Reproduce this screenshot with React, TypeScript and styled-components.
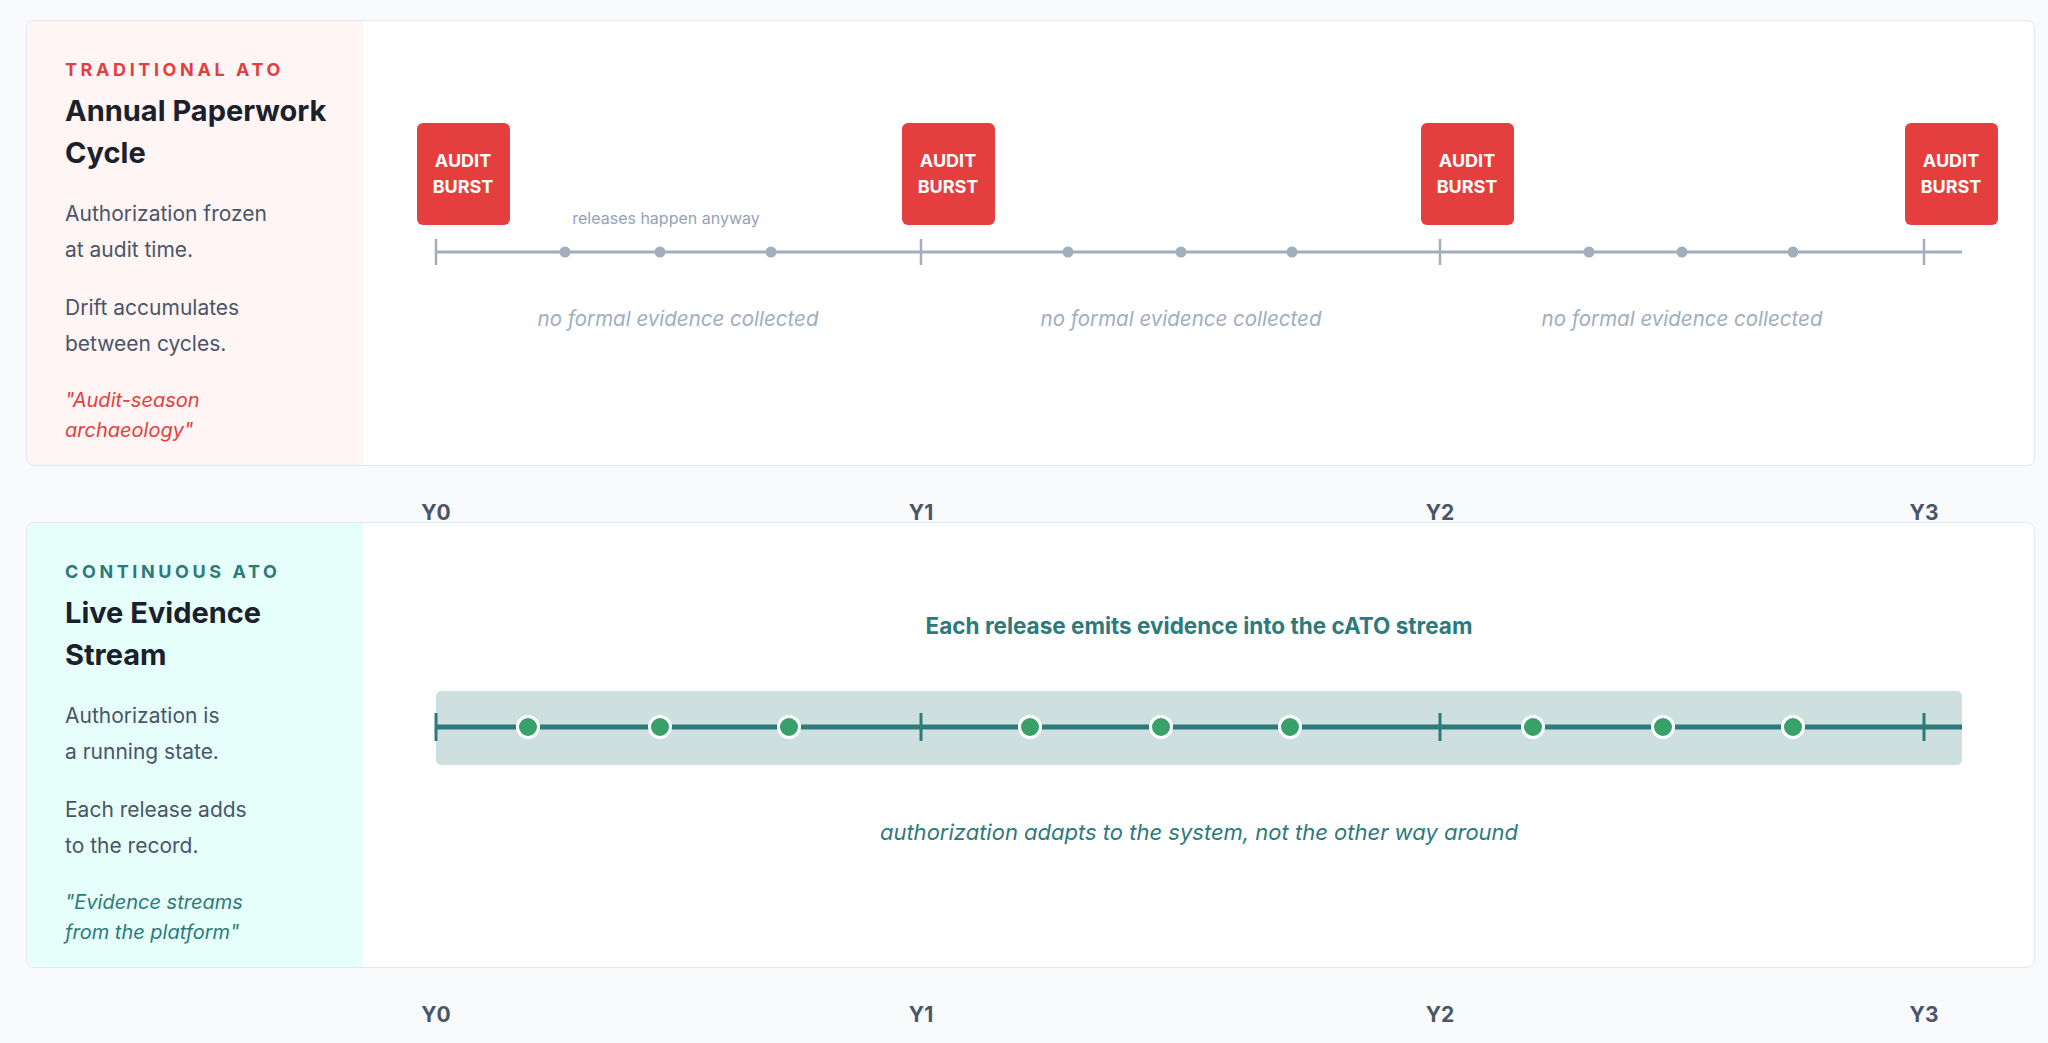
import styled, { createGlobalStyle } from 'styled-components'

const GlobalStyle = createGlobalStyle`
	body {
		margin: 0;
		background: #f8fafc;
		font-family: Inter, 'Noto Sans', sans-serif;
	}
`

// chart coordinates are relative to the right area of each card (card x 26, panel 336)
const OX = 363
const TICKS = [436, 921, 1440, 1924].map((x) => x - OX)
const AXIS_END = 1962 - OX
const GREY_DOTS = [565, 660, 771, 1068, 1181, 1292, 1589, 1682, 1793].map((x) => x - OX)
const GREEN_DOTS = [528, 660, 789, 1030, 1161, 1290, 1533, 1663, 1793].map((x) => x - OX)
const GAP_CENTERS = [678, 1181, 1682].map((x) => x - OX)

type Tone = 'red' | 'teal'

const Traditional = () => (
	<Chart viewBox="0 0 1671 444" width="1671" height="444">
		<line x1={TICKS[0]} y1={231} x2={AXIS_END} y2={231} stroke="#a0aec0" strokeWidth="3" />
		{TICKS.map((x) => (
			<line key={x} x1={x} y1={218} x2={x} y2={244} stroke="#a0aec0" strokeWidth="2.5" />
		))}
		{GREY_DOTS.map((x) => (
			<circle key={x} cx={x} cy={231} r="5.5" fill="#a0aec0" />
		))}
		<text x={666 - OX} y={203} textAnchor="middle" fontSize="16" fill="#94a3b8">
			releases happen anyway
		</text>
		{GAP_CENTERS.map((x) => (
			<text key={x} x={x} y={305} textAnchor="middle" fontSize="20.5" fontStyle="italic" fill="#a0aec0">
				no formal evidence collected
			</text>
		))}
		{TICKS.map((x) => (
			<g key={'b' + x}>
				<rect x={x - 19} y={102} width={93} height={102} rx="6" fill="#e53e3e" />
				<text x={x + 27} y={146} textAnchor="middle" fontSize="18" fontWeight="700" fill="#fff">AUDIT</text>
				<text x={x + 27} y={172} textAnchor="middle" fontSize="18" fontWeight="700" fill="#fff">BURST</text>
			</g>
		))}
	</Chart>
)

const Continuous = () => (
	<Chart viewBox="0 0 1671 444" width="1671" height="444">
		<text x={1199 - OX} y={111} textAnchor="middle" fontSize="22.5" fontWeight="700" fill="#2c7a7b">
			Each release emits evidence into the cATO stream
		</text>
		<rect x={TICKS[0]} y={168} width={AXIS_END - TICKS[0]} height={74} rx="5" fill="#cddfde" />
		<line x1={TICKS[0]} y1={204} x2={AXIS_END} y2={204} stroke="#2c7a7b" strokeWidth="5" />
		{TICKS.map((x) => (
			<line key={x} x1={x} y1={190} x2={x} y2={218} stroke="#2c7a7b" strokeWidth="3" />
		))}
		{GREEN_DOTS.map((x) => (
			<circle key={x} cx={x} cy={204} r="10.5" fill="#38a169" stroke="#fff" strokeWidth="3" />
		))}
		<text x={1199 - OX} y={317} textAnchor="middle" fontSize="22" fontStyle="italic" fill="#2c7a7b">
			authorization adapts to the system, not the other way around
		</text>
	</Chart>
)

const Row = ({
	tone,
	label,
	title,
	paras,
	quote,
	children,
}: {
	tone: Tone
	label: string
	title: string[]
	paras: string[][]
	quote: string[]
	children: React.ReactNode
}) => (
	<Card>
		<Panel $tone={tone}>
			<Label $tone={tone}>{label}</Label>
			<Title>
				{title.map((t) => (
					<div key={t}>{t}</div>
				))}
			</Title>
			{paras.map((p) => (
				<Para key={p[0]}>
					{p.map((l) => (
						<div key={l}>{l}</div>
					))}
				</Para>
			))}
			<Quote $tone={tone}>
				{quote.map((l) => (
					<div key={l}>{l}</div>
				))}
			</Quote>
		</Panel>
		<ChartArea>{children}</ChartArea>
	</Card>
)

const Years = () => (
	<YearRow>
		{['Y0', 'Y1', 'Y2', 'Y3'].map((y, i) => (
			<Year key={y} style={{ left: TICKS[i] + OX }}>
				{y}
			</Year>
		))}
	</YearRow>
)

export default function App() {
	return (
		<Page>
			<GlobalStyle />
			<Row
				tone="red"
				label="TRADITIONAL ATO"
				title={['Annual Paperwork', 'Cycle']}
				paras={[
					['Authorization frozen', 'at audit time.'],
					['Drift accumulates', 'between cycles.'],
				]}
				quote={['"Audit-season', 'archaeology"']}
			>
				<Traditional />
			</Row>
			<Years />
			<Row
				tone="teal"
				label="CONTINUOUS ATO"
				title={['Live Evidence', 'Stream']}
				paras={[
					['Authorization is', 'a running state.'],
					['Each release adds', 'to the record.'],
				]}
				quote={['"Evidence streams', 'from the platform"']}
			>
				<Continuous />
			</Row>
			<Years />
		</Page>
	)
}

// Styles
const Page = styled.div`
	padding: 20px 13px 0 26px;
	width: 2048px;
	box-sizing: border-box;
`
const Card = styled.div`
	display: flex;
	height: 446px;
	background: #fff;
	border: 1px solid #e2e8f0;
	border-radius: 8px;
	box-sizing: border-box;
	overflow: hidden;
`
const Panel = styled.div<{ $tone: Tone }>`
	width: 336px;
	flex-shrink: 0;
	box-sizing: border-box;
	padding: 37px 16px 0 38px;
	background: ${(p) => (p.$tone === 'red' ? '#fff5f5' : '#e6fffa')};
	border-radius: 8px 0 0 8px;
`
const Label = styled.div<{ $tone: Tone }>`
	font-size: 18px;
	font-weight: 700;
	letter-spacing: 0.2em;
	line-height: 24px;
	color: ${(p) => (p.$tone === 'red' ? '#e53e3e' : '#2c7a7b')};
`
const Title = styled.div`
	margin-top: 8px;
	font-size: 29px;
	font-weight: 700;
	line-height: 42px;
	color: #1a202c;
`
const Para = styled.div`
	margin-top: 22px;
	font-size: 21px;
	line-height: 36px;
	color: #4a5568;
`
const Quote = styled.div<{ $tone: Tone }>`
	margin-top: 23px;
	font-size: 20px;
	font-style: italic;
	line-height: 30px;
	color: ${(p) => (p.$tone === 'red' ? '#e53e3e' : '#2c7a7b')};
`
const ChartArea = styled.div`
	flex: 1;
	min-width: 0;
`
const Chart = styled.svg`
	display: block;
	font-family: Inter, 'Noto Sans', sans-serif;
`
const YearRow = styled.div`
	position: relative;
	height: 56px;
	margin-left: -26px;
`
const Year = styled.span`
	position: absolute;
	top: 35px;
	transform: translateX(-50%);
	font-size: 21px;
	font-weight: 700;
	line-height: 24px;
	color: #4a5568;
`
